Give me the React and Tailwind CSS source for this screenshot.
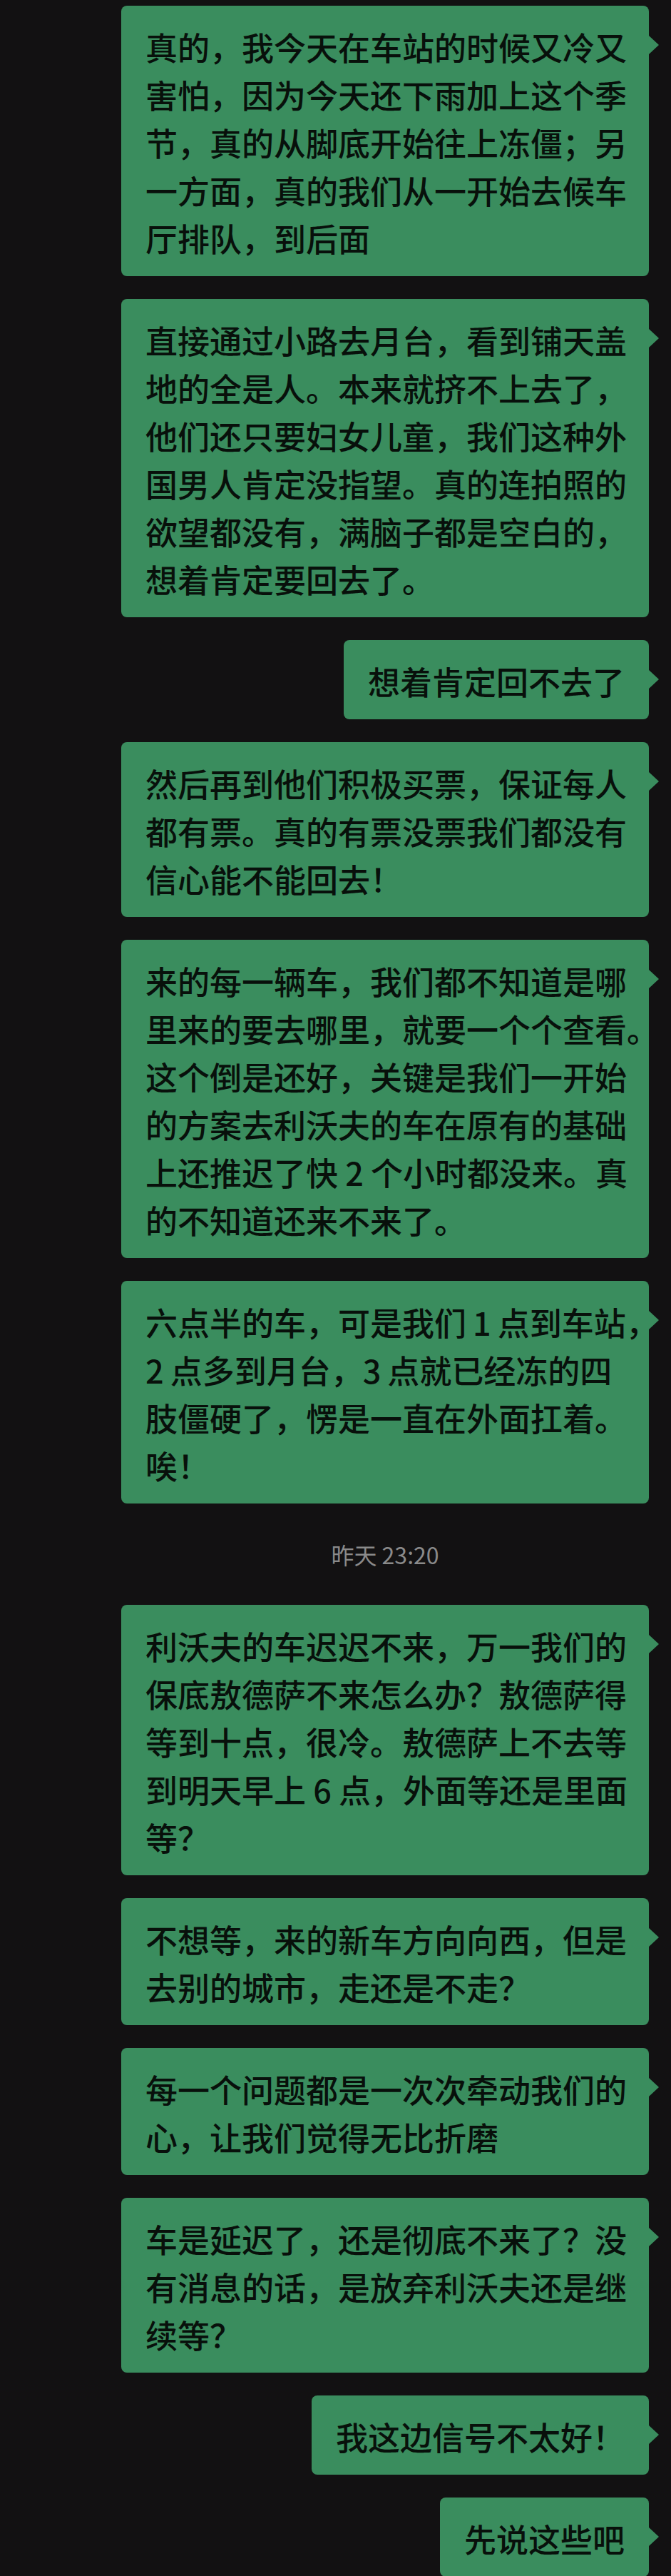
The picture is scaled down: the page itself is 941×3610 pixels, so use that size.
import React from 'react';

const messages = [
    {
        lines: [
            '真的，我今天在车站的时候又冷又',
            '害怕，因为今天还下雨加上这个季',
            '节，真的从脚底开始往上冻僵；另',
            '一方面，真的我们从一开始去候车',
            '厅排队，到后面',
        ],
    },
    {
        lines: [
            '直接通过小路去月台，看到铺天盖',
            '地的全是人。本来就挤不上去了，',
            '他们还只要妇女儿童，我们这种外',
            '国男人肯定没指望。真的连拍照的',
            '欲望都没有，满脑子都是空白的，',
            '想着肯定要回去了。',
        ],
    },
    { lines: ['想着肯定回不去了'] },
    {
        lines: [
            '然后再到他们积极买票，保证每人',
            '都有票。真的有票没票我们都没有',
            '信心能不能回去！',
        ],
    },
    {
        lines: [
            '来的每一辆车，我们都不知道是哪',
            '里来的要去哪里，就要一个个查看。',
            '这个倒是还好，关键是我们一开始',
            '的方案去利沃夫的车在原有的基础',
            '上还推迟了快 2 个小时都没来。真',
            '的不知道还来不来了。',
        ],
    },
    {
        lines: [
            '六点半的车，可是我们\u20091\u2009点到车站，',
            '2\u2009点多到月台，3\u2009点就已经冻的四',
            '肢僵硬了，愣是一直在外面扛着。',
            '唉！',
        ],
    },
    { time: '昨天 23:20' },
    {
        lines: [
            '利沃夫的车迟迟不来，万一我们的',
            '保底敖德萨不来怎么办？敖德萨得',
            '等到十点，很冷。敖德萨上不去等',
            '到明天早上 6 点，外面等还是里面',
            '等？',
        ],
    },
    {
        lines: [
            '不想等，来的新车方向向西，但是',
            '去别的城市，走还是不走？',
        ],
    },
    {
        lines: [
            '每一个问题都是一次次牵动我们的',
            '心，让我们觉得无比折磨',
        ],
    },
    {
        lines: [
            '车是延迟了，还是彻底不来了？没',
            '有消息的话，是放弃利沃夫还是继',
            '续等？',
        ],
    },
    { lines: ['我这边信号不太好！'] },
    { lines: ['先说这些吧'] },
];

const Bubble = ({ lines }) => {
    const multi = lines.length > 1;
    return (
        <div
            className={`relative rounded-[8px] bg-[#3a8d5e] pt-[24px] pb-[20px] px-[34px] text-[45px] font-medium leading-[67px] text-[#08100b] whitespace-nowrap ${multi ? 'w-full' : ''}`}
        >
            {lines.map((line, i) => (
                <div key={i}>{line}</div>
            ))}
            {/* tail */}
            <span className="absolute left-full top-[42px] h-0 w-0 border-y-[13px] border-l-[14px] border-y-transparent border-l-[#3a8d5e]" />
        </div>
    );
};

export default function App() {
    return (
        <div className="min-h-screen bg-[#121112] pt-2 pl-[170px] pr-[31px] flex flex-col items-end gap-8 font-['Noto_Sans_CJK_SC','Noto_Sans',sans-serif]">
            {messages.map((m, i) =>
                m.time ? (
                    <div key={i} className="w-full my-[19px] text-center text-[32px] leading-[40px] text-[#8a8a8a]">
                        {m.time}
                    </div>
                ) : (
                    <Bubble key={i} lines={m.lines} />
                )
            )}
        </div>
    );
}
